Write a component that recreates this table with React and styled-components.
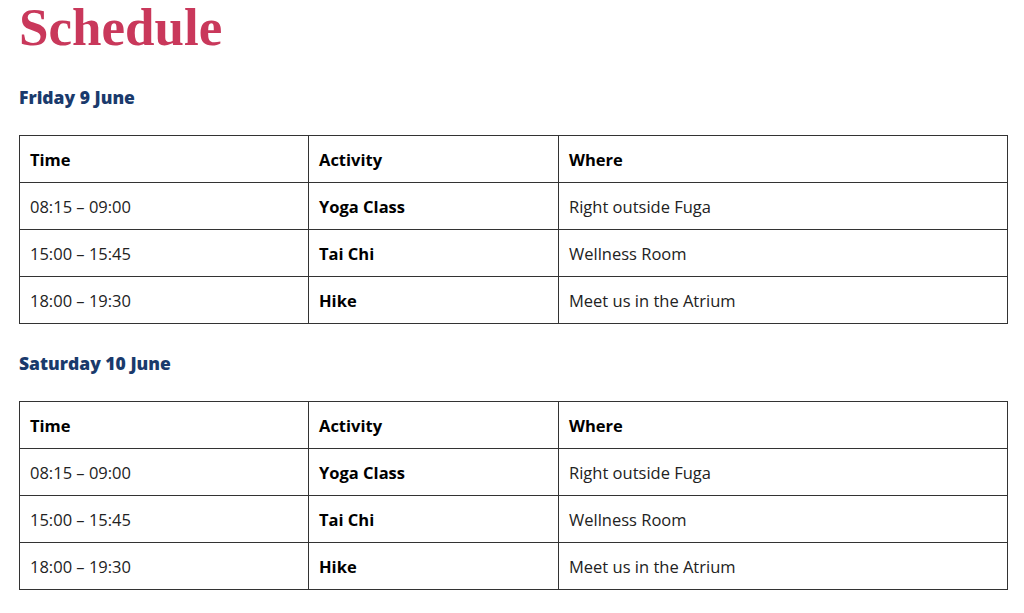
import styled, { createGlobalStyle } from "styled-components";

const days = [
  {
    title: "Friday 9 June",
    rows: [
      { time: "08:15 – 09:00", activity: "Yoga Class", where: "Right outside Fuga" },
      { time: "15:00 – 15:45", activity: "Tai Chi", where: "Wellness Room" },
      { time: "18:00 – 19:30", activity: "Hike", where: "Meet us in the Atrium" },
    ],
  },
  {
    title: "Saturday 10 June",
    rows: [
      { time: "08:15 – 09:00", activity: "Yoga Class", where: "Right outside Fuga" },
      { time: "15:00 – 15:45", activity: "Tai Chi", where: "Wellness Room" },
      { time: "18:00 – 19:30", activity: "Hike", where: "Meet us in the Atrium" },
    ],
  },
];

export default function App() {
  return (
    <>
      <GlobalStyle />
      <Page>
        <Title>Schedule</Title>
        {days.map((day) => (
          <Day key={day.title}>
            <DayTitle>{day.title}</DayTitle>
            <Table>
              <colgroup>
                <col style={{ width: 289 }} />
                <col style={{ width: 250 }} />
                <col />
              </colgroup>
              <thead>
                <tr>
                  <Th>Time</Th>
                  <Th>Activity</Th>
                  <Th>Where</Th>
                </tr>
              </thead>
              <tbody>
                {day.rows.map((row) => (
                  <tr key={row.time}>
                    <Td>{row.time}</Td>
                    <Td $bold>{row.activity}</Td>
                    <Td>{row.where}</Td>
                  </tr>
                ))}
              </tbody>
            </Table>
          </Day>
        ))}
      </Page>
    </>
  );
}

const GlobalStyle = createGlobalStyle`
  body {
    margin: 0;
    background: #fff;
  }
`;

const Page = styled.div`
  padding: 0 16px 0 19px;
  width: 989px;
`;

const Title = styled.h1`
  margin: 0;
  font-family: "Liberation Serif", serif;
  font-weight: 700;
  font-size: 53px;
  line-height: 55px;
  color: #c9385b;
`;

const Day = styled.section`
  margin-top: 32px;
  & + & {
    margin-top: 29px;
  }
`;

const DayTitle = styled.h2`
  margin: 0 0 28px;
  font-family: "Open Sans", sans-serif;
  font-weight: 800;
  font-size: 17.5px;
  line-height: 20px;
  color: #1a3a6c;
`;

const Table = styled.table`
  width: 989px;
  border-collapse: collapse;
  table-layout: fixed;
  font-family: "Open Sans", sans-serif;
  font-size: 16.5px;
  color: #1a1a1a;
`;

const Th = styled.th`
  height: 46px;
  padding: 0 10px;
  border: 1px solid #333;
  text-align: left;
  font-weight: 700;
  color: #000;
`;

const Td = styled.td`
  height: 46px;
  padding: 0 10px;
  border: 1px solid #333;
  font-weight: ${(p) => (p.$bold ? 700 : 400)};
  color: ${(p) => (p.$bold ? "#000" : "#222")};
`;
